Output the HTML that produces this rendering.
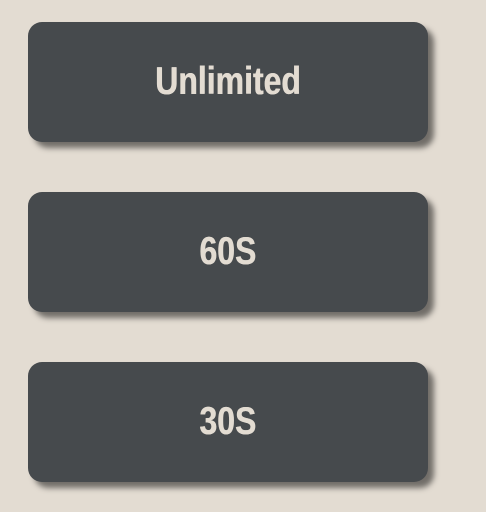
<!DOCTYPE html>
<html><head><style>
html,body{margin:0;padding:0;background:#e3dcd2;width:486px;height:512px;overflow:hidden}
.b{position:absolute;left:28px;width:400px;height:120px;background:#464a4d;border-radius:14px;box-shadow:6px 6px 6px rgba(0,0,0,0.5);color:#e3dcd2;font-family:"Liberation Sans",sans-serif;font-weight:bold;font-size:39px;display:flex;align-items:center;justify-content:center}
.b span{display:inline-block;transform:scaleX(0.82);margin-top:0px;text-shadow:0.6px 0 0 #e3dcd2}
</style></head><body>
<div class="b" style="top:22px"><span>Unlimited</span></div>
<div class="b" style="top:192px"><span>60S</span></div>
<div class="b" style="top:362px"><span>30S</span></div>
</body></html>
